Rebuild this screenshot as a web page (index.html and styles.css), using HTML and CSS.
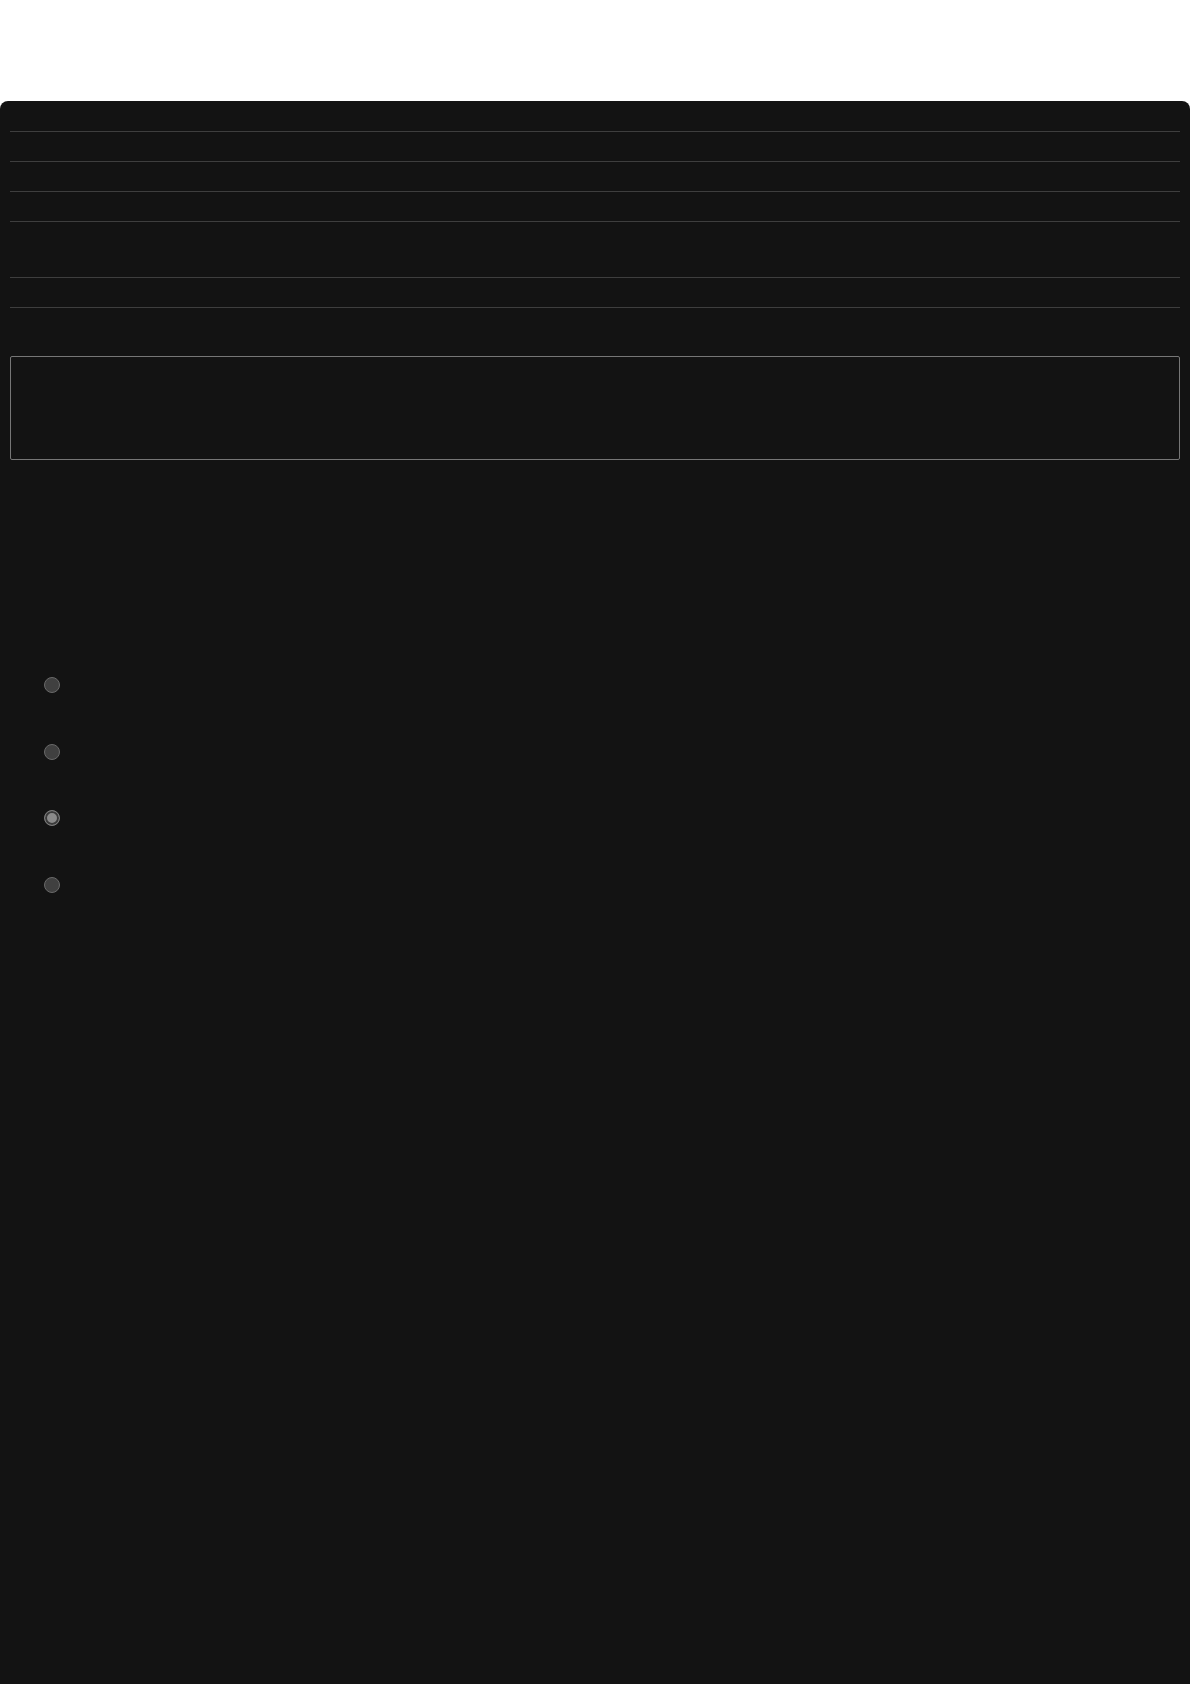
FILE: index.html
```html
<!DOCTYPE html>
<html>
<head>
  <title>Settings</title>
  <link rel="stylesheet" href="styles.css">
</head>
<body>

  <div class="panel">
    <div class="rows">
      <div class="row"></div>
      <div class="row"></div>
      <div class="row"></div>
      <div class="row"></div>
      <div class="row row-tall"></div>
      <div class="row"></div>
    </div>

    <div class="box"></div>

    <div class="choices">
      <div class="choice"><input type="radio" name="opt" class="radio" aria-label="option 1"></div>
      <div class="choice"><input type="radio" name="opt" class="radio" aria-label="option 2"></div>
      <div class="choice"><input type="radio" name="opt" class="radio" aria-label="option 3" checked></div>
      <div class="choice"><input type="radio" name="opt" class="radio" aria-label="option 4"></div>
    </div>
  </div>

</body>
</html>
```

FILE: styles.css
```css
body {
  margin: 0;
  background-color: #fff;
  font: 14px "Liberation Sans", Arial, sans-serif;
}

.panel {
  margin-top: 101px;
  min-height: 1582px;
  padding: 1px 10px 0 10px;
  background-color: #131313;
  border-radius: 8px 8px 0 0;
}

.rows {
  display: flex;
  flex-direction: column;
}

.row {
  height: 29px;
  border-bottom: 1px solid #3e3e3e;
}

.row-tall {
  height: 55px;
}

.box {
  margin-top: 48px;
  height: 102px;
  border: 1.5px solid #767676;
  border-radius: 2px;
}

.choices {
  margin-top: 192px;
  padding-left: 34px;
  display: flex;
  flex-direction: column;
}

.choice {
  height: 66.6px;
  display: flex;
  align-items: center;
}

.radio {
  appearance: none;
  -webkit-appearance: none;
  margin: 0;
  width: 16px;
  height: 16px;
  border-radius: 50%;
  border: 1.5px solid #696969;
  background-color: #404040;
  box-sizing: border-box;
}

.radio:checked {
  border-color: #7a7a7a;
  background-color: #8a8a8a;
  box-shadow: inset 0 0 0 2px #3a3a3a;
}
```
